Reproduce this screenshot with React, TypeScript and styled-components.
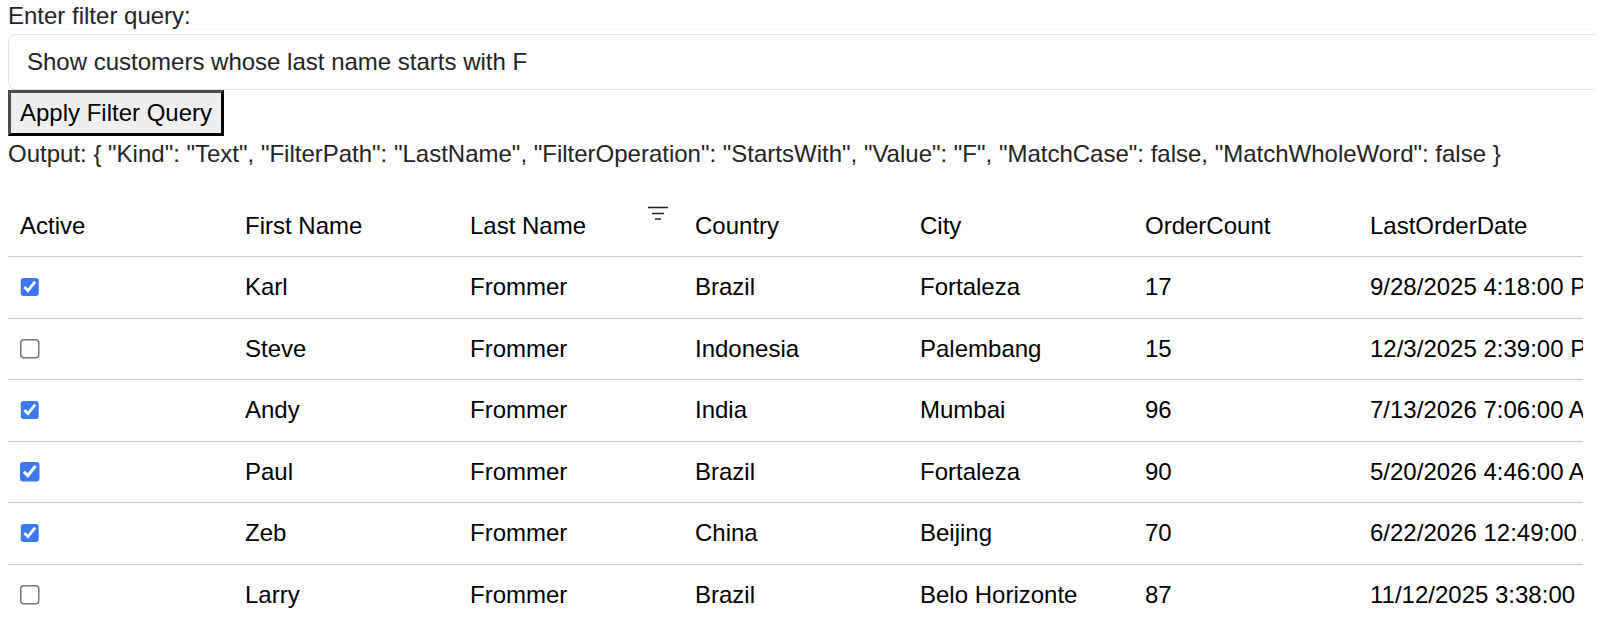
import React from 'react';
import styled, { createGlobalStyle } from 'styled-components';

const GlobalStyle = createGlobalStyle`
  html, body {
    height: 100%;
    overflow: hidden;
    background: #fff;
  }
  body {
    margin: 3px 8px 0;
    font-family: "Liberation Sans", Arial, sans-serif;
    color: #242424;
  }
`;

const Page = styled.div`
  font-size: 24px;
  line-height: 26px;
`;

const QueryLabel = styled.div`
  width: 1640px;
  height: 26px;
  margin-bottom: 4px;
  border-bottom: 1px solid #f6f6fb;
`;

const QueryInput = styled.input`
  display: block;
  box-sizing: border-box;
  width: 1640px;
  height: 56px;
  padding: 0 18px;
  border: 1px solid #e3e3ea;
  border-radius: 8px;
  font: inherit;
  color: #242424;
  outline: none;
`;

const ApplyButton = styled.button`
  display: block;
  box-sizing: border-box;
  height: 46px;
  padding: 0 9px;
  border-style: solid;
  border-width: 3px;
  border-color: #4d4d4d #000 #000 #4d4d4d;
  background: #efefef;
  font: inherit;
  color: #000;
`;

const Output = styled.div`
  margin-top: 5px;
  height: 26px;
  white-space: nowrap;
`;

const Table = styled.table`
  margin-top: 29px;
  width: 1575px;
  table-layout: fixed;
  border-collapse: collapse;
  color: #000;
`;

const HeaderCell = styled.th`
  position: relative;
  height: 60px;
  padding: 0 12px;
  font-weight: 400;
  text-align: left;
  white-space: nowrap;
  border-bottom: 1px solid #c8c8c8;
`;

const Cell = styled.td`
  height: 60.5px;
  padding: 0 12px;
  white-space: nowrap;
  overflow: hidden;
  border-bottom: 1px solid #c8c8c8;
`;

const LastRow = styled.tr`
  td {
    border-bottom: none;
  }
`;

const FilterIcon = styled.svg`
  position: absolute;
  top: 10px;
  right: 15px;
  width: 20px;
  height: 14px;
`;

const Check = styled.input`
  display: block;
  margin: 0;
  zoom: 1.5;
  accent-color: #3b78f2;
`;

type Customer = {
  active: boolean;
  first: string;
  last: string;
  country: string;
  city: string;
  orders: number;
  date: string;
};

const customers: Customer[] = [
  { active: true, first: 'Karl', last: 'Frommer', country: 'Brazil', city: 'Fortaleza', orders: 17, date: '9/28/2025 4:18:00 PM' },
  { active: false, first: 'Steve', last: 'Frommer', country: 'Indonesia', city: 'Palembang', orders: 15, date: '12/3/2025 2:39:00 PM' },
  { active: true, first: 'Andy', last: 'Frommer', country: 'India', city: 'Mumbai', orders: 96, date: '7/13/2026 7:06:00 AM' },
  { active: true, first: 'Paul', last: 'Frommer', country: 'Brazil', city: 'Fortaleza', orders: 90, date: '5/20/2026 4:46:00 AM' },
  { active: true, first: 'Zeb', last: 'Frommer', country: 'China', city: 'Beijing', orders: 70, date: '6/22/2026 12:49:00 AM' },
  { active: false, first: 'Larry', last: 'Frommer', country: 'Brazil', city: 'Belo Horizonte', orders: 87, date: '11/12/2025 3:38:00 PM' },
];

const headers = ['Active', 'First Name', 'Last Name', 'Country', 'City', 'OrderCount', 'LastOrderDate'];

const App: React.FC = () => {
  const renderCells = (c: Customer) => (
    <>
      <Cell>
        <Check type="checkbox" checked={c.active} readOnly />
      </Cell>
      <Cell>{c.first}</Cell>
      <Cell>{c.last}</Cell>
      <Cell>{c.country}</Cell>
      <Cell>{c.city}</Cell>
      <Cell>{c.orders}</Cell>
      <Cell>{c.date}</Cell>
    </>
  );

  return (
    <Page>
      <GlobalStyle />
      <QueryLabel>Enter filter query:</QueryLabel>
      <QueryInput defaultValue="Show customers whose last name starts with F" />
      <ApplyButton type="button">Apply Filter Query</ApplyButton>
      <Output>
        Output: {'{'} "Kind": "Text", "FilterPath": "LastName", "FilterOperation": "StartsWith", "Value": "F", "MatchCase": false, "MatchWholeWord": false {'}'}
      </Output>
      <Table>
        <thead>
          <tr>
            {headers.map((h) => (
              <HeaderCell key={h}>
                {h}
                {h === 'Last Name' && (
                  <FilterIcon viewBox="0 0 20 14">
                    <path d="M0 1.5h20M4 7.5h12M7 13h6" stroke="#222" strokeWidth="1.4" fill="none" />
                  </FilterIcon>
                )}
              </HeaderCell>
            ))}
          </tr>
        </thead>
        <tbody>
          {customers.slice(0, -1).map((c) => (
            <tr key={c.first}>{renderCells(c)}</tr>
          ))}
          <LastRow>{renderCells(customers[customers.length - 1])}</LastRow>
        </tbody>
      </Table>
    </Page>
  );
};

export default App;
